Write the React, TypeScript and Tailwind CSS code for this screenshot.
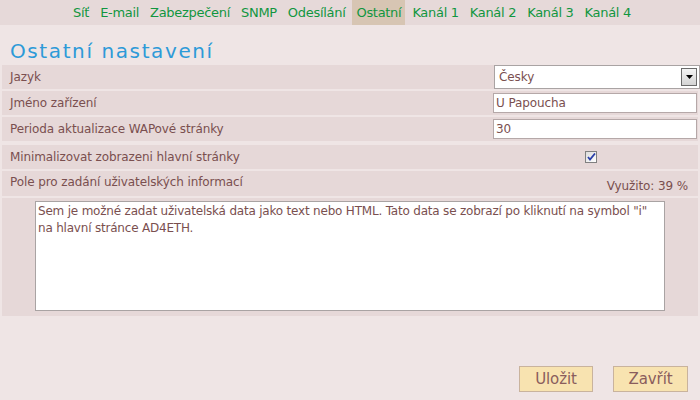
import React from 'react';

const tabs = ['Síť', 'E-mail', 'Zabezpečení', 'SNMP', 'Odesílání', 'Ostatní', 'Kanál 1', 'Kanál 2', 'Kanál 3', 'Kanál 4'];

export default function App() {
  return (
    <div className="w-[700px] h-[400px] bg-[#efe5e5] text-[#7a4f4f] text-[12px] tracking-[-0.1px] font-['DejaVu_Sans','Noto_Sans',sans-serif] flex flex-col overflow-hidden">
      {/* menu */}
      <div className="h-[25px] bg-[#e6d9d9] flex justify-center pl-[4px]">
        {tabs.map((t) => (
          <div
            key={t}
            className={`h-full px-[4px] mx-[1.5px] flex items-center text-[13px] tracking-[-0.3px] text-[#11963f] ${t === 'Ostatní' ? 'bg-[#d7c5b3] text-[#3c7a3a]' : ''}`}
          >
            {t}
          </div>
        ))}
      </div>

      <h1 className="mt-[13px] ml-[10px] h-[26px] text-[20px] leading-[26px] tracking-[1.6px] text-[#2d9ad8]">
        Ostatní nastavení
      </h1>

      <div className="mx-[2px] mt-[1px] flex flex-col">
        <div className="h-[24px] bg-[#e6d8d8] flex items-center justify-between pl-[8px]">
          <span>Jazyk</span>
          <div className="w-[206px] h-[24px] mr-[-2px] bg-white border border-[#a9a3a3] flex items-center justify-between pl-[4px]">
            <span>Česky</span>
            <div className="w-[16px] h-[18px] mr-[2px] border border-[#6b6b6b] bg-gradient-to-b from-[#f4f4f4] to-[#d4d4d4] flex items-center justify-center">
              <svg width="7" height="4" viewBox="0 0 7 4"><path d="M0 0h7L3.5 4z" fill="#000" /></svg>
            </div>
          </div>
        </div>
        <div className="h-[24px] mt-[2px] bg-[#e6d8d8] flex items-center justify-between pl-[8px]">
          <span>Jméno zařízení</span>
          <div className="w-[204px] h-[20px] mr-[1px] bg-white border border-[#b5a8a8] flex items-center pl-[2px]">U Papoucha</div>
        </div>
        <div className="h-[24px] mt-[2px] bg-[#e6d8d8] flex items-center justify-between pl-[8px]">
          <span>Perioda aktualizace WAPové stránky</span>
          <div className="w-[204px] h-[20px] mr-[1px] bg-white border border-[#b5a8a8] flex items-center pl-[2px]">30</div>
        </div>
        <div className="h-[24px] mt-[4px] bg-[#e6d8d8] flex items-center pl-[8px]">
          <span className="flex-1">Minimalizovat zobrazeni hlavní stránky</span>
          <div className="w-[12px] h-[12px] mr-[101px] border border-[#808080] bg-gradient-to-br from-[#dcdcdc] to-[#ffffff] flex items-center justify-center">
            <svg width="9" height="8" viewBox="0 0 9 8"><path d="M1 4l2 2.5L8 0.5" fill="none" stroke="#2a3fa8" strokeWidth="1.8" /></svg>
          </div>
        </div>
        <div className="h-[25px] mt-[2px] bg-[#e6d8d8] flex items-center justify-between pl-[8px] pr-[10px]">
          <span className="-mt-[4px]">Pole pro zadání uživatelských informací</span>
          <span className="mt-[4px]">Využito: 39 %</span>
        </div>
        <div className="h-[118px] mt-[2px] bg-[#e6d8d8] pt-[3px] pl-[33px]">
          <div className="w-[630px] h-[110px] bg-white border border-[#a9a3a3] px-[2px] pt-[1px] leading-[17px] tracking-[-0.2px] text-[#7a4f4f]">
            Sem je možné zadat uživatelská data jako text nebo HTML. Tato data se zobrazí po kliknutí na symbol "i" na hlavní stránce AD4ETH.
          </div>
        </div>
      </div>

      <div className="flex justify-end gap-[20px] mt-[50px] pr-[12px]">
        <button className="w-[74px] h-[26px] bg-[#f8e3b0] border border-[#c9b39d] text-[15px] text-[#8a5d5d]">Uložit</button>
        <button className="w-[75px] h-[26px] bg-[#f8e3b0] border border-[#c9b39d] text-[15px] text-[#8a5d5d]">Zavřít</button>
      </div>
    </div>
  );
}
